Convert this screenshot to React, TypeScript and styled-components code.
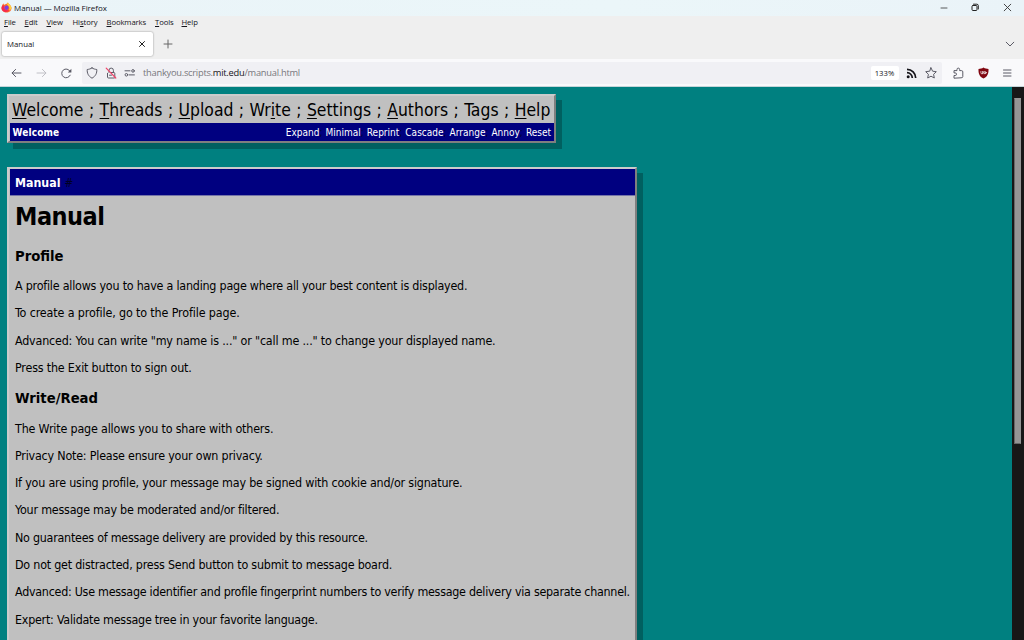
import React from 'react';
import styled, { createGlobalStyle } from 'styled-components';

const Global = createGlobalStyle`
  * { box-sizing: border-box; }
  html, body { margin: 0; padding: 0; overflow: hidden; }
  h1, h2, p { margin: 0; }
  u { text-decoration-thickness: 1px; text-underline-offset: 2px; text-decoration-skip-ink: none; }
`;

const ui = `'Open Sans', 'Noto Sans', sans-serif`;
const tahoma = `Tahoma, 'DejaVu Sans Condensed', 'DejaVu Sans', sans-serif`;

const Window = styled.div`
  width: 1024px;
  height: 640px;
  display: flex;
  flex-direction: column;
  overflow: hidden;
  background: #efefef;
  font-family: ${ui};
  color: #15141a;
`;

const TitleBar = styled.header`
  height: 16px;
  flex: none;
  display: flex;
  align-items: center;
  padding: 0 0 1px 1px;
  background: linear-gradient(90deg, #eaf4f8, #ebf6f9 60%, #eaf3f8);
  font-size: 8px;
`;

const WindowTitle = styled.span`
  margin-left: 2px;
  flex: 1;
  line-height: 10px;
  letter-spacing: -0.05px;
`;

const WindowButtons = styled.div`
  display: flex;
  align-items: center;
  gap: 23px;
  padding-right: 12px;
`;

const MenuBar = styled.nav`
  height: 12px;
  flex: none;
  display: flex;
  align-items: center;
  gap: 8px;
  padding-left: 4px;
  font-size: 7.7px;
  line-height: 10px;
  letter-spacing: -0.1px;
  white-space: nowrap;
  u { text-underline-offset: 1px; }
`;

const MenuItem = styled.span<{ $w: number }>`
  width: ${(p) => p.$w}px;
`;

const TabStrip = styled.div`
  height: 31px;
  flex: none;
  display: flex;
  align-items: center;
  padding: 0 9px 0 2px;
`;

const Tab = styled.div`
  width: 151px;
  height: 24px;
  display: flex;
  align-items: center;
  justify-content: space-between;
  padding: 0 7px 0 5px;
  border-radius: 2px;
  background: #fff;
  box-shadow: 0 0 2px rgba(0, 0, 0, 0.45);
  font-size: 7.8px;
`;

const NewTab = styled.div`
  flex: 1;
  display: flex;
  padding-left: 10px;
`;

const Toolbar = styled.div`
  height: 28px;
  flex: none;
  display: flex;
  align-items: center;
  padding: 1px 12px 0 11px;
  background: #f9f9fb;
  border-bottom: 1px solid #c5d5d9;
`;

const NavButtons = styled.div`
  width: 71px;
  display: flex;
  align-items: center;
  gap: 14px;
`;

const UrlBar = styled.div`
  width: 860px;
  height: 22px;
  display: flex;
  align-items: center;
  padding: 0 5px 0 4px;
  border-radius: 2px;
  background: #f0f0f4;
`;

const UrlIcons = styled.div`
  display: flex;
  align-items: center;
  gap: 7px;
  width: 57px;
`;

const Url = styled.div`
  flex: 1;
  font-size: 9.3px;
  line-height: 14px;
  letter-spacing: -0.25px;
  color: #77777c;
  b { font-weight: 400; color: #15141a; }
`;

const Zoom = styled.span`
  width: 28px;
  height: 14px;
  line-height: 14px;
  margin-right: 7.5px;
  border-radius: 2px;
  background: #fff;
  font-size: 7.7px;
  text-align: center;
`;

const PageActions = styled.div`
  display: flex;
  align-items: center;
  gap: 8px;
`;

const Actions = styled.div`
  flex: 1;
  display: flex;
  align-items: center;
  justify-content: space-between;
  padding-left: 11px;
`;

const Viewport = styled.div`
  flex: 1;
  min-height: 0;
  display: flex;
  background: #008080;
`;

const Page = styled.main`
  flex: 1;
  display: flex;
  flex-direction: column;
  align-items: flex-start;
  gap: 24px;
  padding: 7px 0 0 7px;
  font-family: ${tahoma};
  color: #000;
  white-space: nowrap;
`;

const Scrollbar = styled.div`
  width: 12px;
  background: #171717;
  padding: 11px 3px 0 2px;
`;

const Thumb = styled.div`
  height: 346px;
  background: #959595;
  border: 1px solid #666;
  border-top-color: #959595;
  border-right-color: #959595;
`;

const Panel = styled.section<{ $w: number; $h: number }>`
  width: ${(p) => p.$w}px;
  height: ${(p) => p.$h}px;
  flex: none;
  background: #c0c0c0;
  border: 2px solid;
  border-color: #cbcbcb #7f7f7f #7f7f7f #cbcbcb;
  box-shadow: 6px 6px 0 #006060;
`;

const MainMenu = styled.nav`
  height: 27px;
  padding: 1px 3px 0;
  display: flex;
  align-items: center;
  justify-content: space-between;
  font-size: 17.4px;
  line-height: 26px;
`;

const Item = styled.span``;

const Strip = styled.div`
  height: 18px;
  display: flex;
  align-items: center;
  justify-content: space-between;
  margin-left: 1px;
  padding: 0 2.5px 0 2.5px;
  background: #000080;
  color: #fff;
  font-size: 10px;
  b { letter-spacing: 0.15px; }
`;

const Commands = styled.div`
  display: flex;
  i { font-style: normal; color: #000030; margin-right: 3px; }
`;

const PanelTitle = styled.div`
  height: 27px;
  display: flex;
  align-items: center;
  gap: 4px;
  margin-left: 1px;
  padding: 1px 0 0 5px;
  background: #000080;
  border-bottom: 1px solid #7474a8;
  color: #fff;
  font-size: 12.3px;
  a { color: #000024; font-size: 11.5px; }
`;

const Article = styled.div`
  padding-left: 6px;
`;

const Heading = styled.h1`
  height: 42.6px;
  line-height: 42.6px;
  font-size: 25px;
  letter-spacing: -0.5px;
`;

const SubHeading = styled.h2`
  height: 33.4px;
  line-height: 33.4px;
  font-size: 14.7px;
`;

const Line = styled.p<{ $ls: number }>`
  height: 27.3px;
  line-height: 27.3px;
  font-size: 12.4px;
  letter-spacing: ${(p) => p.$ls}px;
`;

const Icon = styled.svg`
  display: block;
  flex: none;
  fill: none;
  stroke: #5b5b66;
  stroke-width: 1;
  stroke-linecap: round;
  stroke-linejoin: round;
`;

const Firefox = () => (
  <Icon width="11" height="11" viewBox="0 0 22 22">
    <path d="M2 8C3 4 5 3 5 3l1 3c2-2 4-2 5-2 1-2 3-3 3-3 0 3 6 4 7 11 0 6-5 9-10 9S1 17 1 12c0-2 1-4 1-4z" fill="#ff6a2b" stroke="none" />
    <path d="M14 1c0 3 6 4 7 11-1 3-3 5-5 5 2-5 0-9-4-12 0-2 2-4 2-4z" fill="#ffd23a" stroke="none" />
    <path d="M2 8c3-2 4-2 4 2 0 5 6 8 11 6-4 6-16 5-16-4z" fill="#f5294e" stroke="none" />
    <circle cx="11" cy="11.5" r="4.3" fill="#7a3fe0" stroke="none" />
  </Icon>
);

const commands = ['Expand', 'Minimal', 'Reprint', 'Cascade', 'Arrange', 'Annoy', 'Reset'];

const profileLines: [string, number][] = [
  ['A profile allows you to have a landing page where all your best content is displayed.', -0.218],
  ['To create a profile, go to the Profile page.', -0.125],
  ['Advanced: You can write "my name is ..." or "call me ..." to change your displayed name.', -0.182],
  ['Press the Exit button to sign out.', -0.18],
];

const writeLines: [string, number][] = [
  ['The Write page allows you to share with others.', -0.17],
  ['Privacy Note: Please ensure your own privacy.', -0.2],
  ['If you are using profile, your message may be signed with cookie and/or signature.', -0.189],
  ['Your message may be moderated and/or filtered.', -0.207],
  ['No guarantees of message delivery are provided by this resource.', -0.246],
  ['Do not get distracted, press Send button to submit to message board.', -0.217],
  ['Advanced: Use message identifier and profile fingerprint numbers to verify message delivery via separate channel.', -0.262],
  ['Expert: Validate message tree in your favorite language.', -0.24],
];

export default function App() {
  return (
    <Window>
      <Global />
      <TitleBar>
        <Firefox />
        <WindowTitle>Manual — Mozilla Firefox</WindowTitle>
        <WindowButtons>
          <Icon width="8" height="8" viewBox="0 0 8 8"><path d="M1 4h6" stroke="#333" strokeWidth=".8" /></Icon>
          <Icon width="9" height="9" viewBox="0 0 9 9"><rect x="1" y="2.500" width="5" height="5" rx="1" stroke="#222" /><path d="M2.500 1.200h3.300q1.500 0 1.500 1.500V6" stroke="#222" /></Icon>
          <Icon width="9" height="9" viewBox="0 0 9 9"><path d="M1.200 1.200l6.600 6.600M7.800 1.200L1.200 7.800" stroke="#333" strokeWidth=".9" /></Icon>
        </WindowButtons>
      </TitleBar>
      <MenuBar>
        <MenuItem $w={12.5}><u>F</u>ile</MenuItem>
        <MenuItem $w={14}><u>E</u>dit</MenuItem>
        <MenuItem $w={18}><u>V</u>iew</MenuItem>
        <MenuItem $w={26}>Hi<u>s</u>tory</MenuItem>
        <MenuItem $w={40.5}><u>B</u>ookmarks</MenuItem>
        <MenuItem $w={18.5}><u>T</u>ools</MenuItem>
        <MenuItem $w={18}><u>H</u>elp</MenuItem>
      </MenuBar>
      <TabStrip>
        <Tab>
          <span>Manual</span>
          <Icon width="8" height="8" viewBox="0 0 8 8"><path d="M1.500 1.500l5 5M6.500 1.500l-5 5" stroke="#222" /></Icon>
        </Tab>
        <NewTab>
          <Icon width="10" height="10" viewBox="0 0 10 10"><path d="M5 1v8M1 5h8" stroke="#666" /></Icon>
        </NewTab>
        <Icon width="10" height="8" viewBox="0 0 10 8"><path d="M1.200 2.200L5 6l3.800-3.800" /></Icon>
      </TabStrip>
      <Toolbar>
        <NavButtons>
          <Icon width="11" height="10" viewBox="0 0 11 10"><path d="M10 5H1.200M4.600 1.400L1 5l3.600 3.600" /></Icon>
          <Icon width="11" height="10" viewBox="0 0 11 10"><path d="M1 5h8.800M6.400 1.400L10 5 6.400 8.600" stroke="#c0c0c6" /></Icon>
          <Icon width="11" height="11" viewBox="0 0 11 11"><path d="M9.200 7.200A4.400 4.400 0 1 1 9 3.200" /><path d="M10.400.8v3.600H6.800z" fill="#5b5b66" stroke="none" /></Icon>
        </NavButtons>
        <UrlBar>
          <UrlIcons>
            <Icon width="12" height="12" viewBox="0 0 12 12"><path d="M6 .9C7.500 2 9.200 2.300 10.800 2.500c.2 3.500-1 6.600-4.800 8.700C2.200 9.100 1 6 1.200 2.500 2.800 2.300 4.500 2 6 .9z" /></Icon>
            <Icon width="12" height="12" viewBox="0 0 12 12"><path d="M4 5.500V3.300a2.200 2.200 0 0 1 4.400 0v2.200M5.500 5.500h3.300q1 0 1 1v3.800M2.500 6.300v3.700q0 1 1 1h5.800M4.500 8.200h2" /><path d="M1.200 1.200l9.600 9.800" stroke="#f0446a" strokeWidth="1.200" /></Icon>
            <Icon width="12" height="8" viewBox="0 0 12 8"><path d="M1 1.800h5M5.200 5.900h5.200" /><circle cx="9" cy="1.900" r="1.300" /><circle cx="2.400" cy="5.800" r="1.300" /></Icon>
          </UrlIcons>
          <Url>thankyou.scripts.<b>mit.edu</b>/manual.html</Url>
          <Zoom>133%</Zoom>
          <PageActions>
            <Icon width="11" height="11" viewBox="0 0 11 11"><path d="M1 1.300a8.700 8.700 0 0 1 8.700 8.700M1 4.700a5.300 5.300 0 0 1 5.300 5.300" stroke="#15141a" strokeWidth="1.700" strokeLinecap="butt" /><circle cx="2.200" cy="8.800" r="1.500" fill="#15141a" stroke="none" /></Icon>
            <Icon width="12" height="12" viewBox="0 0 12 12"><path d="M6 .8l1.600 3.400 3.700.5-2.700 2.600.7 3.700L6 9.200 2.700 11l.7-3.700L.7 4.700l3.700-.5z" /></Icon>
          </PageActions>
        </UrlBar>
        <Actions>
          <Icon width="11" height="12" viewBox="0 0 11 12"><path d="M1 10.800V8.500h1.200a1.300 1.300 0 0 0 0-2.600H1V3.600h3V2.400a1.300 1.300 0 0 1 2.600 0v1.200H8.500q1.300 0 1.300 1.300v4.700q0 1.200-1.300 1.200z" /></Icon>
          <Icon width="11" height="12" viewBox="0 0 11 12"><path d="M5.500.4C7 1.400 8.700 1.800 10.500 1.900c.2 4.600-1 7.600-5 9.700C1.500 9.500.3 6.500.5 1.900 2.300 1.800 4 1.400 5.500.4z" fill="#800610" stroke="none" /><path d="M2.900 4.500v1.300q0 1 1 1t1-1V4.500M4.900 4.500v2.300" stroke="#fff" strokeWidth=".7" /><circle cx="7" cy="5.700" r="1.100" stroke="#fff" strokeWidth=".8" /></Icon>
          <Icon width="10" height="10" viewBox="0 0 10 10"><path d="M1.500 2h7.500M1.500 5h7.500M1.500 8h7.500" /></Icon>
        </Actions>
      </Toolbar>
      <Viewport>
        <Page>
          <Panel $w={548.5} $h={49}>
            <MainMenu>
              <Item><u>W</u>elcome</Item><Item>;</Item>
              <Item><u>T</u>hreads</Item><Item>;</Item>
              <Item><u>U</u>pload</Item><Item>;</Item>
              <Item>Wr<u>i</u>te</Item><Item>;</Item>
              <Item><u>S</u>ettings</Item><Item>;</Item>
              <Item><u>A</u>uthors</Item><Item>;</Item>
              <Item>Tags</Item><Item>;</Item>
              <Item><u>H</u>elp</Item>
            </MainMenu>
            <Strip>
              <b>Welcome</b>
              <Commands>
                {commands.map((c, n) => (
                  <span key={c}>{c}{n < commands.length - 1 && <i>;</i>}</span>
                ))}
              </Commands>
            </Strip>
          </Panel>
          <Panel $w={630} $h={520}>
            <PanelTitle><b>Manual</b><a>#</a></PanelTitle>
            <Article>
              <Heading>Manual</Heading>
              <SubHeading>Profile</SubHeading>
              {profileLines.map(([text, ls]) => <Line key={text} $ls={ls}>{text}</Line>)}
              <SubHeading>Write/Read</SubHeading>
              {writeLines.map(([text, ls]) => <Line key={text} $ls={ls}>{text}</Line>)}
            </Article>
          </Panel>
        </Page>
        <Scrollbar><Thumb /></Scrollbar>
      </Viewport>
    </Window>
  );
}
